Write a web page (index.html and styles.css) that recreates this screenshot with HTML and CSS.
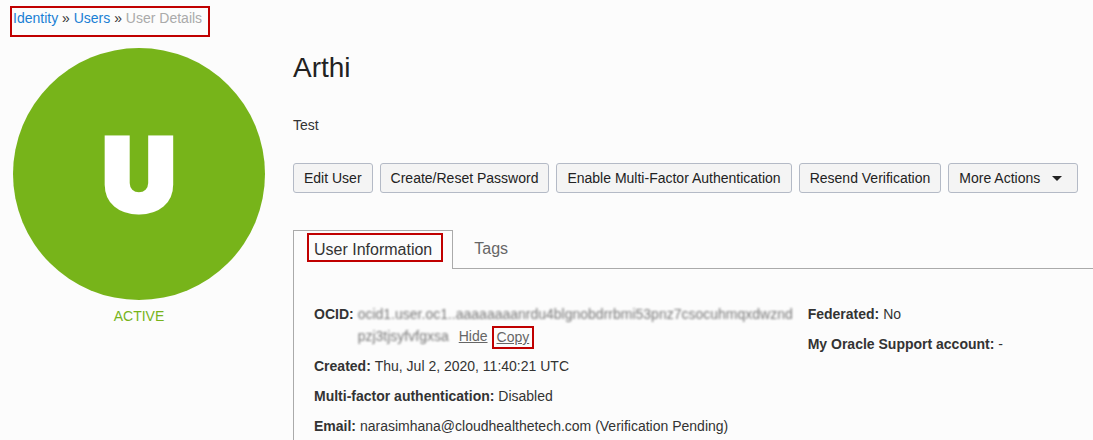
FILE: index.html
```html
<!DOCTYPE html>
<html lang="en">
<head>
    <meta charset="UTF-8">
    <meta name="viewport" content="width=device-width, initial-scale=1.0">
    <title>User Details</title>
    <link rel="stylesheet" href="styles.css">
</head>
<body>
    <!-- Breadcrumb -->
    <nav class="breadcrumb highlight">
        <a href="#">Identity</a> » <a href="#">Users</a> » <span class="current">User Details</span>
    </nav>

    <div class="page">
        <!-- Status -->
        <aside class="status">
            <div class="avatar">U</div>
            <div class="status-text">ACTIVE</div>
        </aside>

        <main class="details">
            <h1>Arthi</h1>
            <p class="description">Test</p>

            <!-- Actions -->
            <div class="actions">
                <button type="button">Edit User</button>
                <button type="button">Create/Reset Password</button>
                <button type="button">Enable Multi-Factor Authentication</button>
                <button type="button">Resend Verification</button>
                <button type="button" class="more">More Actions
                    <svg width="10" height="5" viewBox="0 0 10 5"><path d="M0 0h10L5 5z" fill="#222"/></svg>
                </button>
            </div>

            <!-- Tabs -->
            <div class="tabs" role="tablist">
                <button type="button" class="tab active" role="tab" aria-selected="true"><span class="highlight">User Information</span></button>
                <button type="button" class="tab" role="tab" aria-selected="false">Tags</button>
                <div class="tabs-line"></div>
            </div>

            <div class="panel" role="tabpanel">
                <dl class="info">
                    <div class="row ocid">
                        <dt>OCID:</dt>
                        <dd>
                            <span class="masked">ocid1.user.oc1..aaaaaaaanrdu4blgnobdrrbmi53pnz7csocuhmqxdwznd</span>
                            <span class="masked">pzj3tjsyfvfgxsa</span>
                            <span class="links"><a href="#">Hide</a> <a href="#" class="copy highlight">Copy</a></span>
                        </dd>
                    </div>
                    <div class="row"><dt>Created:</dt> <dd>Thu, Jul 2, 2020, 11:40:21 UTC</dd></div>
                    <div class="row"><dt>Multi-factor authentication:</dt> <dd>Disabled</dd></div>
                    <div class="row"><dt>Email:</dt> <dd>narasimhana@cloudhealthetech.com (Verification Pending)</dd></div>
                </dl>
                <dl class="info">
                    <div class="row"><dt>Federated:</dt> <dd>No</dd></div>
                    <div class="row"><dt>My Oracle Support account:</dt> <dd>-</dd></div>
                </dl>
            </div>
        </main>
    </div>
</body>
</html>
```
FILE: styles.css
```css
* {
    margin: 0;
    padding: 0;
    box-sizing: border-box;
}
body {
    font-family: "Liberation Sans", Arial, sans-serif;
    font-size: 14px;
    line-height: 20px;
    color: #333;
    background-color: #fcfcfc;
    padding-top: 6px;
    overflow: hidden;
}
.highlight {
    border: 2px solid #c00000;
}
.breadcrumb {
    width: fit-content;
    height: 31px;
    margin-left: 10px;
    padding: 0 6px 0 1px;
}
.breadcrumb a {
    color: #1a7fd4;
    text-decoration: none;
}
.breadcrumb .current {
    color: #aaa;
}
.page {
    display: flex;
    gap: 28px;
    padding: 11px 0 0 13px;
}
.status {
    flex: none;
    text-align: center;
}
.avatar {
    display: flex;
    align-items: center;
    justify-content: center;
    width: 252px;
    height: 252px;
    border-radius: 50%;
    background-color: #77b41a;
    color: #fff;
    font-family: Inter, sans-serif;
    font-size: 101px;
    font-weight: 900;
    -webkit-text-stroke: 5px #fff;
}
.status-text {
    margin-top: 6px;
    color: #77b41a;
}
.details {
    flex: 1;
    min-width: 0;
}
h1 {
    font-size: 28px;
    font-weight: normal;
    line-height: 40px;
    color: #222;
}
.description {
    margin-top: 27px;
}
.actions {
    display: flex;
    gap: 7px;
    margin-top: 28px;
}
.actions button {
    height: 30px;
    padding: 0 10px;
    border: 1px solid #b4bac6;
    border-radius: 3px;
    background-color: #f4f4f4;
    color: #222;
    font: inherit;
    white-space: nowrap;
    cursor: pointer;
}
.actions .more {
    display: flex;
    align-items: center;
    gap: 12px;
    padding-right: 15px;
}
.tabs {
    display: flex;
    height: 39px;
    margin-top: 37px;
}
.tab {
    padding: 0 21px;
    border: 0;
    border-bottom: 1px solid #aaa;
    background: none;
    color: #666;
    font: inherit;
    font-size: 16px;
    cursor: pointer;
}
.tab.active {
    padding: 0 9px 5px 13px;
    border: 1px solid #aaa;
    border-bottom: 0;
    color: #333;
}
.tab .highlight {
    display: block;
    height: 29px;
    padding: 5px 9px 0 5px;
}
.tabs-line {
    flex: 1;
    border-bottom: 1px solid #aaa;
}
.panel {
    display: flex;
    gap: 14px;
    min-height: 180px;
    padding: 35px 0 0 20px;
    border-left: 1px solid #aaa;
}
.info {
    display: flex;
    flex-direction: column;
    gap: 10px;
}
dt, dd {
    display: inline;
}
dt {
    font-weight: bold;
}
.ocid {
    display: flex;
    gap: 4px;
}
.ocid dd {
    display: flex;
    flex-wrap: wrap;
    width: 436px;
    row-gap: 2px;
}
.masked {
    color: #777;
    filter: blur(1px);
    user-select: none;
}
.links {
    display: flex;
    gap: 4px;
    height: 20px;
    margin-left: 10px;
}
.links a {
    color: #666;
}
.copy {
    height: 23px;
    padding: 0 3px;
    line-height: 18px;
}
```
